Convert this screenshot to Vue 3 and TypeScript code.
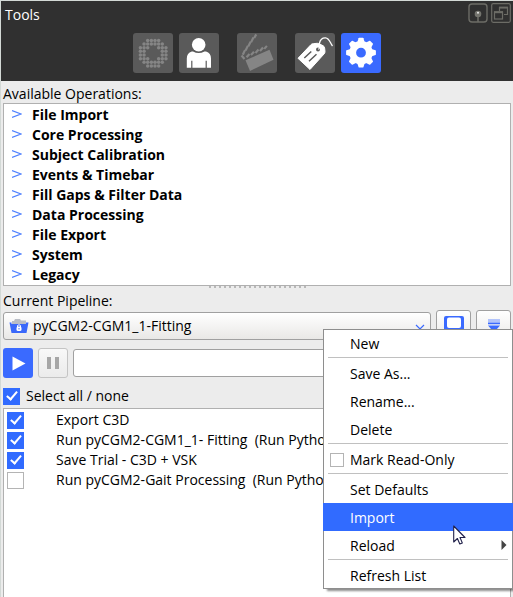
<script setup lang="ts">
import { ref } from 'vue'

interface PipelineStep {
  id: string
  label: string
  enabled: boolean
}

const operations: string[] = [
  'File Import',
  'Core Processing',
  'Subject Calibration',
  'Events & Timebar',
  'Fill Gaps & Filter Data',
  'Data Processing',
  'File Export',
  'System',
  'Legacy',
]

const steps = ref<PipelineStep[]>([
  { id: 'step-1', label: 'Export C3D', enabled: true },
  { id: 'step-2', label: 'Run pyCGM2-CGM1_1- Fitting  (Run Python)', enabled: true },
  { id: 'step-3', label: 'Save Trial - C3D + VSK', enabled: true },
  { id: 'step-4', label: 'Run pyCGM2-Gait Processing  (Run Python)', enabled: false },
])

const selectAll = ref(true)
const readOnly = ref(false)
const pipeline = ref('pyCGM2-CGM1_1-Fitting')
const command = ref('')

// Ring of dots for the system tab, one string per row.
const ringRows = ['..####..', '.######.', '###..###', '##....##', '##....##', '###..###', '.######.', '..####..']
const ringDots = ringRows.flatMap((row, y) =>
  [...row].flatMap((cell, x) => (cell === '#' ? [{ x: 7.4 + x * 3.65, y: 7.4 + y * 3.65 }] : [])),
)

const gearTeeth = [0, 45, 90, 135, 180, 225, 270, 315]
</script>

<template>
  <main class="panel">
    <header class="header">
      <div class="title-bar">
        <h1 class="title">Tools</h1>
        <div class="window-buttons">
          <button class="window-button" type="button" aria-label="Pin">
            <svg viewBox="0 0 20 20" width="20" height="20">
              <rect x="1" y="1" width="18" height="18" rx="3" fill="none" stroke="#6c6c66" stroke-width="1.4" />
              <path d="M10 12v7" stroke="#6c6c66" stroke-width="1.6" />
              <circle cx="10" cy="11" r="3.3" fill="#74746e" />
              <circle cx="10" cy="9.8" r="1" fill="#e8e8e8" />
            </svg>
          </button>
          <button class="window-button" type="button" aria-label="Float">
            <svg viewBox="0 0 20 20" width="20" height="20" fill="none" stroke="#6c6c66">
              <rect x="0.7" y="0.7" width="18.6" height="18.6" rx="1.5" stroke-width="1.2" />
              <path d="M8.5 8V4.5h8v7H13" stroke-width="1.2" />
              <path d="M8 4.6h9" stroke-width="2" />
              <rect x="3.5" y="9" width="8" height="7" stroke-width="1.2" />
              <path d="M3 9.2h9" stroke-width="2" />
            </svg>
          </button>
        </div>
      </div>
      <nav class="tabs">
        <div class="tab-group">
          <button class="tab" type="button" aria-label="System preparation">
            <svg viewBox="0 0 40 40" width="40" height="40" fill="#858585">
              <circle v-for="(dot, i) in ringDots" :key="i" :cx="dot.x" :cy="dot.y" r="1.75" />
            </svg>
          </button>
          <button class="tab" type="button" aria-label="Subject preparation">
            <svg viewBox="0 0 40 40" width="40" height="40" fill="#fff">
              <circle cx="19.7" cy="11.8" r="6.8" />
              <path d="M14 18.6q5.7 3 11.4 0h1.6q5 1.5 5 7v9.100h-4.200v-7h-1.200v7H13.400v-7h-1.200v7H7.800v-9.100q0-5.500 5-7z" />
            </svg>
          </button>
        </div>
        <div class="tab-group">
          <button class="tab" type="button" aria-label="Capture">
            <svg viewBox="0 0 40 40" width="40" height="40">
              <path d="M8.500 27.200L32.500 16.800l4 9.900L13 38z" fill="#858585" />
              <path
                d="M9.500 24.300l3-3.400M14 22.100l3-3.400M18.500 20l3-3.400M23 17.900l3-3.400M27.300 15.900l2.600-3"
                stroke="#858585"
                stroke-width="2.200"
              />
              <path
                d="M5.800 21.700l2.200-4.600M8.600 17.500l2.200-4.600M11.400 13.300l2.200-4.600M14.200 9.100l2.200-4.600M17.200 5l2-3.600"
                stroke="#858585"
                stroke-width="2.200"
              />
              <path d="M4.500 22.500l3 3.500" stroke="#858585" stroke-width="2.200" />
            </svg>
          </button>
        </div>
        <div class="tab-group">
          <button class="tab" type="button" aria-label="Label and edit">
            <svg viewBox="0 0 40 40" width="40" height="40" fill="none">
              <path
                d="M3 25.300L15.600 12q1-1.200 2.600-1.300l4-.4q1 0 2 .5l4 2q1.300.8 1.400 2l.4 3.700q0 1.500-1 2.500L15 36.500z"
                fill="#fff"
                stroke="#fff"
                stroke-linejoin="round"
              />
              <circle cx="23" cy="16.600" r="2" fill="#5a5a5a" />
              <path d="M9.300 25l7-6.500M14 28.300l7.500-7" stroke="#5a5a5a" stroke-width="1.500" />
              <path d="M23.500 16.500C25.500 15 24 12.500 24.500 10c.6-3 3-5.300 6-5.200C34.500 5 35 10 37.500 13" stroke="#fff" stroke-width="1.300" />
            </svg>
          </button>
          <button class="tab tab-active" type="button" aria-label="Pipeline">
            <svg viewBox="0 0 40 40" width="40" height="40" fill="#fff">
              <path
                v-for="angle in gearTeeth"
                :key="angle"
                d="M15.700 11L17.600 5.200q.2-.4.6-.4h3.600q.4 0 .6.4L24.300 11z"
                :transform="`rotate(${angle} 20 19.700)`"
              />
              <circle cx="20" cy="19.700" r="8.300" fill="none" stroke="#fff" stroke-width="6.800" />
            </svg>
          </button>
        </div>
      </nav>
    </header>

    <section class="operations">
      <h2 class="caption">Available Operations:</h2>
      <ul class="operation-list">
        <li v-for="name in operations" :key="name">
          <button class="operation" type="button">
            <svg class="expander" viewBox="0 0 10 8" width="10" height="8">
              <path d="M0 .6L9 4 0 7.400" fill="none" stroke="#4f80ff" stroke-width="1.200" />
            </svg>
            <span>{{ name }}</span>
          </button>
        </li>
      </ul>
    </section>

    <div class="splitter"></div>

    <section class="pipeline">
      <label class="caption" for="pipeline">Current Pipeline:</label>
      <div class="pipeline-row">
        <div class="combo">
          <svg class="folder" viewBox="0 0 20 16" width="20" height="16">
            <path d="M3 6V3h2l1-2h5l1 1.500h5V6z" fill="#b9bdc6" />
            <path d="M.5 4.500h2V6H17V4.500h2.500L17.500 15H2.500z" fill="#3a68fa" />
            <rect x="7.500" y="8.500" width="5" height="4.500" rx="1.500" fill="#fff" />
            <path d="M8.500 9V7.500q1.500-1.500 3 0V9" fill="none" stroke="#fff" />
            <path d="M10 10v1.500" stroke="#3a68fa" />
          </svg>
          <select id="pipeline" v-model="pipeline" class="combo-select">
            <option>pyCGM2-CGM1_1-Fitting</option>
          </select>
          <svg class="combo-arrow" viewBox="0 0 10 6" width="10" height="6">
            <path d="M1 1l4 4 4-4" fill="none" stroke="#3a6aff" stroke-width="1.200" />
          </svg>
        </div>
        <button class="side-button" type="button" aria-label="Save pipeline">
          <svg viewBox="0 0 20 20" width="20" height="20">
            <rect width="20" height="20" rx="2" fill="#3a6aff" />
            <rect x="3" y="1.500" width="14" height="10.500" rx="2" fill="#fff" />
          </svg>
        </button>
        <button class="side-button side-button-menu" type="button" aria-label="Pipeline menu">
          <svg viewBox="0 0 12 16" width="12" height="16">
            <path d="M0 1h12M0 3h12" stroke="#6d90ff" />
            <path d="M0 4.500h12" stroke="#3a6aff" stroke-width="1.500" />
            <path d="M0 6.500h12L8.500 10.500h-5z" fill="#3a6aff" />
          </svg>
        </button>

        <div class="menu" role="menu">
          <button class="menu-item" type="button" role="menuitem">New</button>
          <hr class="menu-line" />
          <button class="menu-item" type="button" role="menuitem">Save As...</button>
          <button class="menu-item" type="button" role="menuitem">Rename...</button>
          <button class="menu-item" type="button" role="menuitem">Delete</button>
          <hr class="menu-line" />
          <label class="menu-item menu-check">
            <input v-model="readOnly" class="menu-box" type="checkbox" />
            <span>Mark Read-Only</span>
          </label>
          <hr class="menu-line" />
          <button class="menu-item" type="button" role="menuitem">Set Defaults</button>
          <button class="menu-item menu-current" type="button" role="menuitem">
            Import
            <svg class="pointer" viewBox="0 0 13 20" width="13" height="20">
              <path
                d="M.7 1v16l3.700-3.500 2.400 5.500 2.500-1.100L7 12.500h5z"
                fill="#fff"
                stroke="#20204a"
                stroke-width="1.100"
                stroke-linejoin="round"
              />
            </svg>
          </button>
          <button class="menu-item" type="button" role="menuitem">
            Reload
            <svg class="submenu-arrow" viewBox="0 0 6 10" width="6" height="10">
              <path d="M.5 0L5.500 5l-5 5z" fill="#444" />
            </svg>
          </button>
          <hr class="menu-line" />
          <button class="menu-item" type="button" role="menuitem">Refresh List</button>
        </div>
      </div>

      <div class="run-row">
        <button class="play" type="button" aria-label="Run pipeline">
          <svg viewBox="0 0 30 30" width="30" height="30"><path d="M9.500 8.500l13 7-13 7z" fill="#fff" /></svg>
        </button>
        <button class="pause" type="button" aria-label="Pause pipeline">
          <svg viewBox="0 0 12 12" width="12" height="12"><path d="M0 0h4v12H0zM8 0h4v12H8z" fill="#a6a6a6" /></svg>
        </button>
        <input v-model="command" class="command" type="text" aria-label="Progress" />
      </div>

      <label class="select-all">
        <input v-model="selectAll" class="box" type="checkbox" />
        <span>Select all / none</span>
      </label>
    </section>

    <ul class="step-list">
      <li v-for="step in steps" :key="step.id">
        <label class="step">
          <input v-model="step.enabled" class="box" type="checkbox" />
          <span class="step-label">{{ step.label }}</span>
        </label>
      </li>
    </ul>
  </main>
</template>

<style>
body {
  background: #ececec;
}
</style>

<style scoped>
.panel {
  position: relative;
  display: flex;
  flex-direction: column;
  box-sizing: border-box;
  min-height: 100vh;
  overflow: hidden;
  border-top: 1px solid #d3d9d6;
  border-left: 1px solid #d3d9d6;
  background: #ececec;
  color: #000;
  font-family: 'Open Sans', 'Noto Sans', sans-serif;
  font-size: 14px;
  line-height: 20px;
}

button,
select,
input {
  box-sizing: border-box;
  margin: 0;
  padding: 0;
  color: inherit;
  font: inherit;
}

svg {
  display: block;
}

ul {
  margin: 0;
  padding: 0;
  list-style: none;
}

.header {
  padding-bottom: 8px;
  background: #303030;
}

.title-bar {
  display: flex;
  justify-content: space-between;
  padding: 2px 2px 0 4px;
}

.title {
  margin: 0;
  padding-top: 2px;
  color: #fff;
  font-size: 14px;
  font-weight: 400;
}

.window-buttons {
  display: flex;
  gap: 3px;
}

.window-button {
  width: 20px;
  height: 20px;
  border: 0;
  background: none;
}

.tabs {
  display: flex;
  justify-content: center;
  gap: 18px;
  padding-top: 8px;
}

.tab-group {
  display: flex;
  gap: 6px;
}

.tab {
  width: 40px;
  height: 40px;
  border: 0;
  border-radius: 3px;
  background: #5a5a5a;
}

.tab-active {
  background: #3a6aff;
}

.operations {
  padding: 2px 2px 0;
}

.caption {
  display: block;
  margin: 0;
  padding-top: 2px;
  font-size: 14px;
  font-weight: 400;
  line-height: 18px;
}

.operation-list {
  padding-top: 1px;
  border: 1px solid #b0b0b0;
  background: #fff;
}

.operation {
  display: flex;
  align-items: center;
  gap: 10px;
  width: 100%;
  height: 20px;
  padding-left: 8px;
  border: 0;
  background: none;
  font-weight: 700;
  text-align: left;
}

.expander {
  margin-bottom: 2px;
}

.splitter {
  align-self: center;
  width: 97px;
  height: 2px;
  margin-bottom: 2px;
  background: repeating-linear-gradient(to right, #b8b8b8 0 2px, transparent 2px 5px);
}

.pipeline {
  padding: 0 2px;
}

.pipeline-row {
  position: relative;
  display: flex;
  align-items: center;
  gap: 5px;
}

.combo {
  position: relative;
  flex: 1;
  height: 28px;
}

.combo-select {
  width: 100%;
  height: 28px;
  padding: 0 24px 0 29px;
  border: 1px solid #a0a0a0;
  border-radius: 3px;
  appearance: none;
  background: linear-gradient(#fff, #e9e8e6);
}

.folder {
  position: absolute;
  top: 6px;
  left: 6px;
}

.combo-arrow {
  position: absolute;
  top: 12px;
  right: 6px;
}

.side-button {
  display: flex;
  justify-content: center;
  width: 35px;
  height: 32px;
  padding-top: 5px;
  border: 1px solid #a0a0a0;
  border-radius: 3px;
  background: linear-gradient(#fff, #e9e8e6);
}

.side-button-menu {
  padding-top: 8px;
}

.side-button svg {
  flex: none;
}

.menu {
  position: absolute;
  z-index: 2;
  top: 19px;
  right: -2px;
  width: 190px;
  outline: 1px solid #8e8e8e;
  outline-offset: -1px;
  background: #fff;
  box-shadow: 4px 2px 2px rgb(0 0 0 / 45%);
}

.menu-item {
  position: relative;
  display: block;
  box-sizing: border-box;
  width: 100%;
  height: 28px;
  padding: 1px 0 0 27px;
  border: 0;
  background: none;
  text-align: left;
}

.menu-check {
  display: flex;
  align-items: center;
  gap: 6px;
  padding-left: 7px;
}

.menu-box {
  width: 14px;
  height: 14px;
  border: 1px solid #b4b4b4;
  appearance: none;
  background: #fff;
}

.menu-box:checked {
  background: #316bff;
}

.menu-current {
  background: #316bff;
  color: #fff;
}

.menu-line {
  height: 1px;
  margin: 0 5px 1px;
  border: 0;
  background: #c0c0c0;
}

.pointer {
  position: absolute;
  z-index: 3;
  top: 22px;
  right: 47px;
}

.submenu-arrow {
  position: absolute;
  top: 9px;
  right: 6px;
}

.run-row {
  display: flex;
  align-items: center;
  gap: 5px;
  padding-top: 6px;
}

.play,
.pause {
  display: flex;
  align-items: center;
  justify-content: center;
  width: 30px;
  height: 30px;
  border: 0;
  border-radius: 3px;
  background: #3a6aff;
}

.pause {
  border: 1px solid #c4c4c4;
  background: linear-gradient(#f8f8f8, #ebebeb);
}

.command {
  flex: 1;
  min-width: 0;
  height: 28px;
  border: 1px solid #a0a0a0;
  border-radius: 3px;
  background: #fff;
}

.select-all {
  display: flex;
  align-items: center;
  gap: 6px;
  padding: 8px 0 2px;
}

.box {
  flex: none;
  width: 17px;
  height: 17px;
  border: 1px solid #b4b4b4;
  appearance: none;
  background: #fff;
}

.box:checked {
  display: grid;
  place-items: center;
  border-color: #316bff;
  background: #316bff;
}

.box:checked::after {
  width: 4px;
  height: 9px;
  margin-bottom: 3px;
  border: solid #fff;
  border-width: 0 2px 2px 0;
  content: '';
  transform: rotate(40deg);
}

.step-list {
  flex: 1;
  margin: 0 2px;
  padding-top: 1px;
  border: 1px solid #b0b0b0;
  border-bottom: 0;
  background: #fff;
}

.step {
  display: flex;
  align-items: center;
  gap: 32px;
  height: 20px;
  padding-left: 3px;
}

.step-label {
  white-space: pre;
}
</style>
